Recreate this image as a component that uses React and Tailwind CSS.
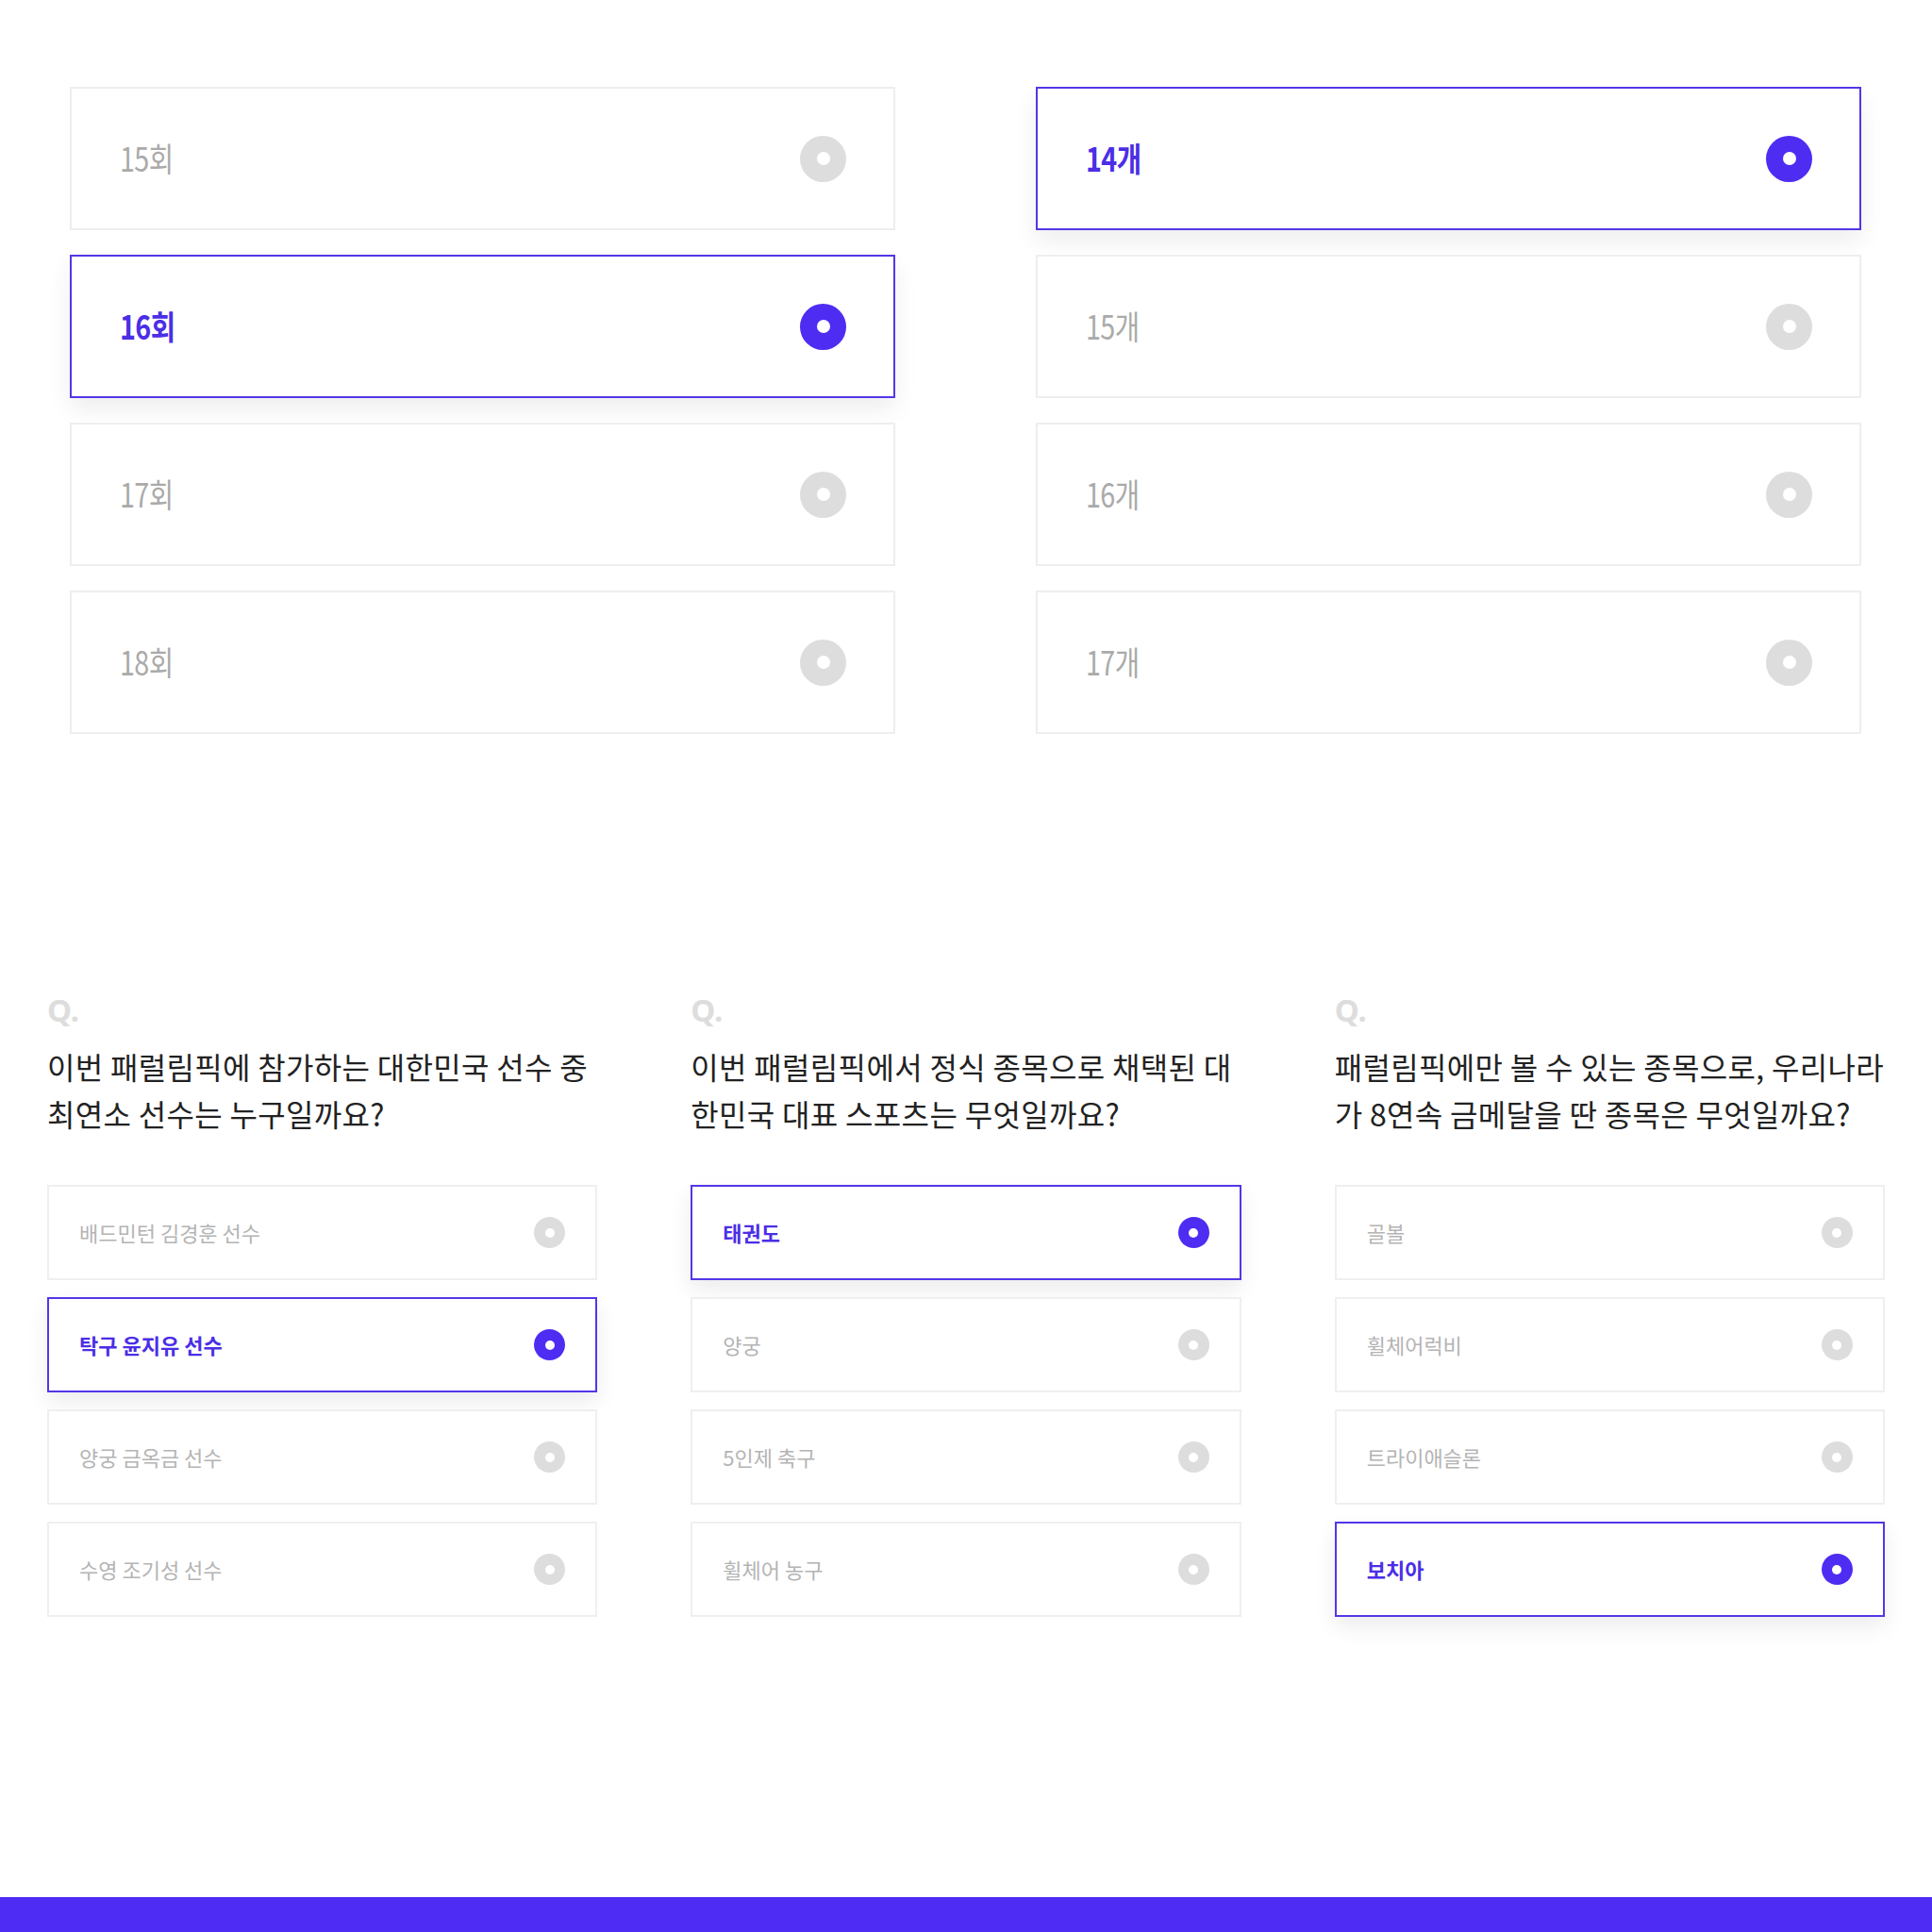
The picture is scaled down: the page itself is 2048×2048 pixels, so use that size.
import React from 'react'

const topLeft = [
  { label: '15회', selected: false },
  { label: '16회', selected: true },
  { label: '17회', selected: false },
  { label: '18회', selected: false }
]

const topRight = [
  { label: '14개', selected: true },
  { label: '15개', selected: false },
  { label: '16개', selected: false },
  { label: '17개', selected: false }
]

const questions = [
  {
    lines: ['이번 패럴림픽에 참가하는 대한민국 선수 중', '최연소 선수는 누구일까요?'],
    options: ['배드민턴 김경훈 선수', '탁구 윤지유 선수', '양궁 금옥금 선수', '수영 조기성 선수'],
    answer: 1
  },
  {
    lines: ['이번 패럴림픽에서 정식 종목으로 채택된 대', '한민국 대표 스포츠는 무엇일까요?'],
    options: ['태권도', '양궁', '5인제 축구', '휠체어 농구'],
    answer: 0
  },
  {
    lines: ['패럴림픽에만 볼 수 있는 종목으로, 우리나라', '가 8연속 금메달을 딴 종목은 무엇일까요?'],
    options: ['골볼', '휠체어럭비', '트라이애슬론', '보치아'],
    answer: 3
  }
]

const BigOption = ({ label, selected }) => (
  <div
    className={`h-[152px] flex items-center justify-between pl-[51px] pr-[50px] bg-white border-2 ${
      selected
        ? 'border-[#5436e8] shadow-[0_12px_24px_rgba(0,0,0,0.07)]'
        : 'border-[#eeeeee]'
    }`}
  >
    <span
      className={`inline-block origin-left scale-x-[0.82] text-[35px] leading-none tracking-[-0.02em] pb-[4px] ${
        selected ? 'text-[#4b2ee6] font-semibold' : 'text-[#aaaaaa] font-normal'
      }`}
    >
      {label}
    </span>
    <div
      className={`w-[49px] h-[49px] rounded-full flex items-center justify-center ${
        selected ? 'bg-[#4f2cf2]' : 'bg-[#dddddd]'
      }`}
    >
      <div className="w-[14px] h-[14px] rounded-full bg-white"></div>
    </div>
  </div>
)

const SmallOption = ({ label, selected }) => (
  <div
    className={`h-[101px] flex items-center justify-between pl-[32px] pr-[32px] bg-white border-2 ${
      selected
        ? 'border-[#5436e8] shadow-[0_10px_22px_rgba(0,0,0,0.08)]'
        : 'border-[#efefef]'
    }`}
  >
    <span
      className={`text-[22px] leading-none pb-[2px] ${
        selected ? 'text-[#4b2ee6] font-semibold' : 'text-[#b4b4b4] font-normal'
      }`}
    >
      {label}
    </span>
    <div
      className={`w-[33px] h-[33px] rounded-full flex items-center justify-center ${
        selected ? 'bg-[#4f2cf2]' : 'bg-[#dddddd]'
      }`}
    >
      <div className="w-[10px] h-[10px] rounded-full bg-white"></div>
    </div>
  </div>
)

const App = () => {
  return (
    <div className="min-h-[2048px] bg-white flex flex-col font-['Noto_Sans_CJK_KR',sans-serif]">
      {/* Top quiz options */}
      <div className="grid grid-cols-2 gap-[149px] pl-[74px] pr-[75px] pt-[92px]">
        <div className="flex flex-col gap-[26px]">
          {topLeft.map((o) => (
            <BigOption key={o.label} {...o} />
          ))}
        </div>
        <div className="flex flex-col gap-[26px]">
          {topRight.map((o) => (
            <BigOption key={o.label} {...o} />
          ))}
        </div>
      </div>

      {/* Question cards */}
      <div className="grid grid-cols-3 gap-[99px] px-[50px] mt-[276px]">
        {questions.map((q, qi) => (
          <div key={qi} className="flex flex-col">
            <div className="text-[33px] leading-none font-bold text-[#dddddd] font-['Noto_Sans',sans-serif]">
              Q.
            </div>
            <p className="mt-[18px] text-[32px] leading-[50px] text-[#222222] whitespace-nowrap tracking-[0.01em]">
              {q.lines[0]}
              <br />
              {q.lines[1]}
            </p>
            <div className="mt-[51px] flex flex-col gap-[18px]">
              {q.options.map((opt, i) => (
                <SmallOption key={opt} label={opt} selected={i === q.answer} />
              ))}
            </div>
          </div>
        ))}
      </div>

      {/* Footer bar */}
      <div className="mt-auto h-[37px] bg-[#4f2cf3]"></div>
    </div>
  )
}

export default App
